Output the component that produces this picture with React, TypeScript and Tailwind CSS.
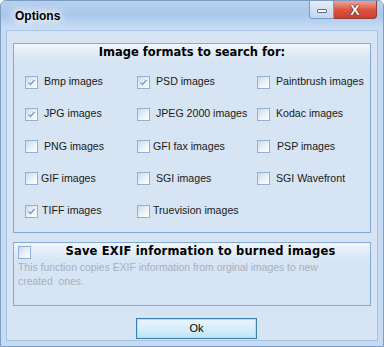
const formats = [
  { label: "Bmp images", checked: true, gap: "ml-[6px]" },
  { label: "PSD images", checked: true, gap: "ml-[6px]" },
  { label: "Paintbrush images", checked: false, gap: "ml-[6px]" },
  { label: "JPG images", checked: true, gap: "ml-[6px]" },
  { label: "JPEG 2000 images", checked: false, gap: "ml-[6px]" },
  { label: "Kodac images", checked: false, gap: "ml-[6px]" },
  { label: "PNG images", checked: false, gap: "ml-[6px]" },
  { label: "GFI fax images", checked: false, gap: "ml-[3px]" },
  { label: "PSP images", checked: false, gap: "ml-[7px]" },
  { label: "GIF images", checked: false, gap: "ml-[3px]" },
  { label: "SGI images", checked: false, gap: "ml-[6px]" },
  { label: "SGI Wavefront", checked: false, gap: "ml-[6px]" },
  { label: "TIFF images", checked: true, gap: "ml-[4px]" },
  { label: "Truevision images", checked: false, gap: "ml-[3px]" },
];

const sans = "font-['Liberation_Sans',Arial,sans-serif]";
const heading = "font-['DejaVu_Sans',Verdana,sans-serif] font-bold text-[11.5px] text-black";

function Check({ checked }: { checked: boolean }) {
  return (
    <span className="flex h-[13px] w-[13px] shrink-0 items-center justify-center border border-[#8eb1d9] bg-gradient-to-br from-[#c9d9ec] via-[#e9f0f8] to-white">
      {checked && (
        <svg width="11" height="11" viewBox="0 0 11 11">
          <path d="M2.5 5.5 L4.5 7.5 L8.5 3" fill="none" stroke="#7d9cc2" strokeWidth="1.4" />
        </svg>
      )}
    </span>
  );
}

export default function App() {
  return (
    <div className="flex h-[347px] w-[384px] flex-col overflow-hidden rounded-t-[6px] border border-[#7d9cc4] bg-[#c6daf1]">
      {/* Barra de título */}
      <div className="flex h-[29px] shrink-0 bg-gradient-to-b from-[#b7d0ee] via-[#a9c8ec] to-[#cddff3]">
        <div
          className={`pl-[14px] pt-[6px] text-[12px] font-bold text-black ${sans} [text-shadow:0_0_6px_#fff,0_0_10px_#fff,0_0_14px_#fff]`}
        >
          Options
        </div>
        <div className="ml-auto mr-[6px] flex h-[18px] items-start">
          <div className="flex h-[18px] w-[25px] items-center justify-center rounded-bl-[4px] border border-t-0 border-[#7f9dc3] bg-gradient-to-b from-[#e4eefa] to-[#c0d5ee]">
            <span className="mt-[2px] h-[4px] w-[10px] rounded-[1px] border border-[#5a6f8c] bg-white" />
          </div>
          <div className="flex h-[18px] w-[43px] items-center justify-center rounded-br-[4px] border border-l-0 border-t-0 border-[#8e3f36] bg-gradient-to-b from-[#eba397] via-[#dc5646] to-[#cf3d2c]">
            <span className={`text-[14px] font-bold leading-none text-white ${sans} [text-shadow:0_0_1px_#4b1510,0_0_1px_#4b1510,0_0_1px_#4b1510]`}>X</span>
          </div>
        </div>
      </div>

      {/* Zona cliente */}
      <div className="mx-[5px] mb-[5px] flex flex-1 flex-col border border-[#a7c2e2] bg-[#d6e4f3] px-[6px] pt-[12px]">
        <div className="h-[190px] border border-[#82a9d7]">
          <div className={`flex h-[17px] items-center justify-center bg-gradient-to-b from-[#f1f6fc] to-[#d6e4f3] ${heading}`}>
            Image formats to search for:
          </div>
          <div className="grid grid-cols-[112px_120px_1fr] auto-rows-[32.25px] pl-[11px] pt-[5px]">
            {formats.map((f) => (
              <div key={f.label} className="flex items-center whitespace-nowrap">
                <Check checked={f.checked} />
                <span className={`text-[10.6px] text-[#1a1a1a] ${sans} ${f.gap}`}>{f.label}</span>
              </div>
            ))}
          </div>
        </div>

        <div className="mt-[9px] h-[64px] border border-[#82a9d7]">
          <div className="flex h-[18px] items-center bg-gradient-to-b from-[#f1f6fc] to-[#d6e4f3] pl-[4px]">
            <Check checked={false} />
            <div className={`flex-1 text-center tracking-[0.2px] ${heading}`}>Save EXIF information to burned images</div>
          </div>
          <p className={`pl-[4px] text-[10.4px] leading-[14px] text-[#a7b1bd] ${sans}`}>
            This function copies EXIF information from orginal images to new
            <br />
            created&nbsp; ones.
          </p>
        </div>

        <button
          className={`ml-[123px] mt-[12px] flex h-[21px] w-[121px] items-center justify-center border border-[#3c7fb1] bg-gradient-to-b from-[#e8f6fd] via-[#d6eefb] to-[#bee4f8] text-[11px] text-black shadow-[inset_0_0_0_1px_#a6e3fa] ${sans}`}
        >
          Ok
        </button>
      </div>
    </div>
  );
}
